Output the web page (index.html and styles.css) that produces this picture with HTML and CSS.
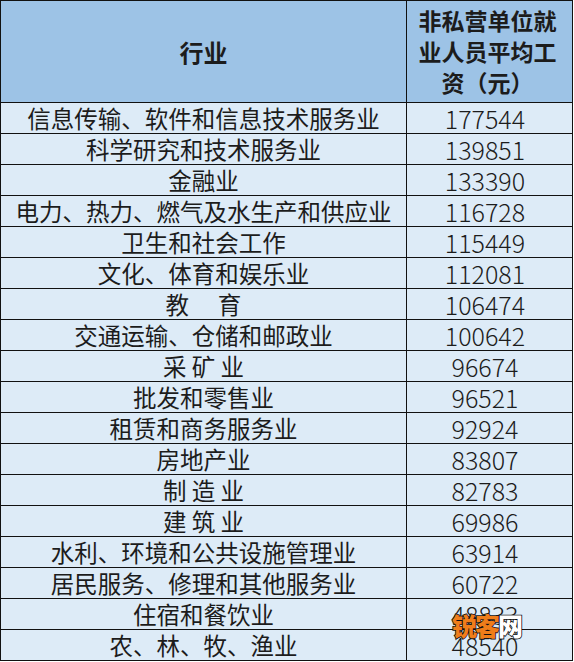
FILE: index.html
```html
<!DOCTYPE html>
<html lang="zh-CN">
<head>
<meta charset="utf-8">
<title>行业平均工资</title>
<link rel="stylesheet" href="styles.css">
</head>
<body>
<div class="sheet">
<table class="wage">
  <thead>
    <tr class="head">
      <th class="ind">行业</th>
      <th class="val"><span class="valtitle">非私营单位就业人员平均工资（元）</span></th>
    </tr>
  </thead>
  <tbody>
    <tr><td class="ind">信息传输、软件和信息技术服务业</td><td class="val">177544</td></tr>
    <tr><td class="ind">科学研究和技术服务业</td><td class="val">139851</td></tr>
    <tr><td class="ind">金融业</td><td class="val">133390</td></tr>
    <tr><td class="ind">电力、热力、燃气及水生产和供应业</td><td class="val">116728</td></tr>
    <tr><td class="ind">卫生和社会工作</td><td class="val">115449</td></tr>
    <tr><td class="ind">文化、体育和娱乐业</td><td class="val">112081</td></tr>
    <tr><td class="ind pre">教　 育</td><td class="val">106474</td></tr>
    <tr><td class="ind">交通运输、仓储和邮政业</td><td class="val">100642</td></tr>
    <tr><td class="ind">采 矿 业</td><td class="val">96674</td></tr>
    <tr><td class="ind">批发和零售业</td><td class="val">96521</td></tr>
    <tr><td class="ind">租赁和商务服务业</td><td class="val">92924</td></tr>
    <tr><td class="ind">房地产业</td><td class="val">83807</td></tr>
    <tr><td class="ind">制 造 业</td><td class="val">82783</td></tr>
    <tr><td class="ind">建 筑 业</td><td class="val">69986</td></tr>
    <tr><td class="ind">水利、环境和公共设施管理业</td><td class="val">63914</td></tr>
    <tr><td class="ind">居民服务、修理和其他服务业</td><td class="val">60722</td></tr>
    <tr><td class="ind">住宿和餐饮业</td><td class="val">48833</td></tr>
    <tr><td class="ind">农、林、牧、渔业</td><td class="val">48540</td></tr>
  </tbody>
</table>
<div class="watermark"><span class="wm-o">锐客</span><span class="wm-w">网</span></div>
</div>
</body>
</html>
```

FILE: styles.css
```css
html, body {
  margin: 0;
  padding: 0;
  background: #ffffff;
}

.sheet {
  position: relative;
  width: 574px;
  height: 662px;
  overflow: hidden;
}

.wage {
  border-collapse: collapse;
  width: 573px;
  table-layout: fixed;
  font-family: "Noto Sans CJK SC", "Noto Sans", sans-serif;
  color: #1c1c1c;
}

.wage th,
.wage td {
  border: 1.5px solid #111;
  padding: 0;
  text-align: center;
  vertical-align: middle;
}

.wage th.ind {
  width: 405px;
}

.head th {
  height: 101px;
  background: #9dc3e6;
  font-weight: 700;
  font-size: 24px;
}

.head th.val {
  font-size: 23px;
  line-height: 31px;
  padding: 0 10px 0 6px;
}

.valtitle {
  display: inline-block;
  width: 140px;
}

.wage tbody td {
  height: 30px;
  background: #ddebf7;
  font-size: 23.5px;
  line-height: 30px;
  white-space: nowrap;
}

.wage tbody td.val {
  font-size: 25px;
  padding-right: 9px;
  font-weight: 300;
}

.pre {
  white-space: pre;
}

.watermark {
  position: absolute;
  left: 452px;
  top: 611px;
  font-family: "Noto Sans CJK SC", sans-serif;
  font-weight: 900;
  font-size: 25px;
  line-height: 28px;
  letter-spacing: -2px;
  -webkit-text-stroke: 1.6px #111;
  paint-order: stroke fill;
}

.wm-o {
  color: #ef7d1a;
}

.wm-w {
  color: #ffffff;
}
```
